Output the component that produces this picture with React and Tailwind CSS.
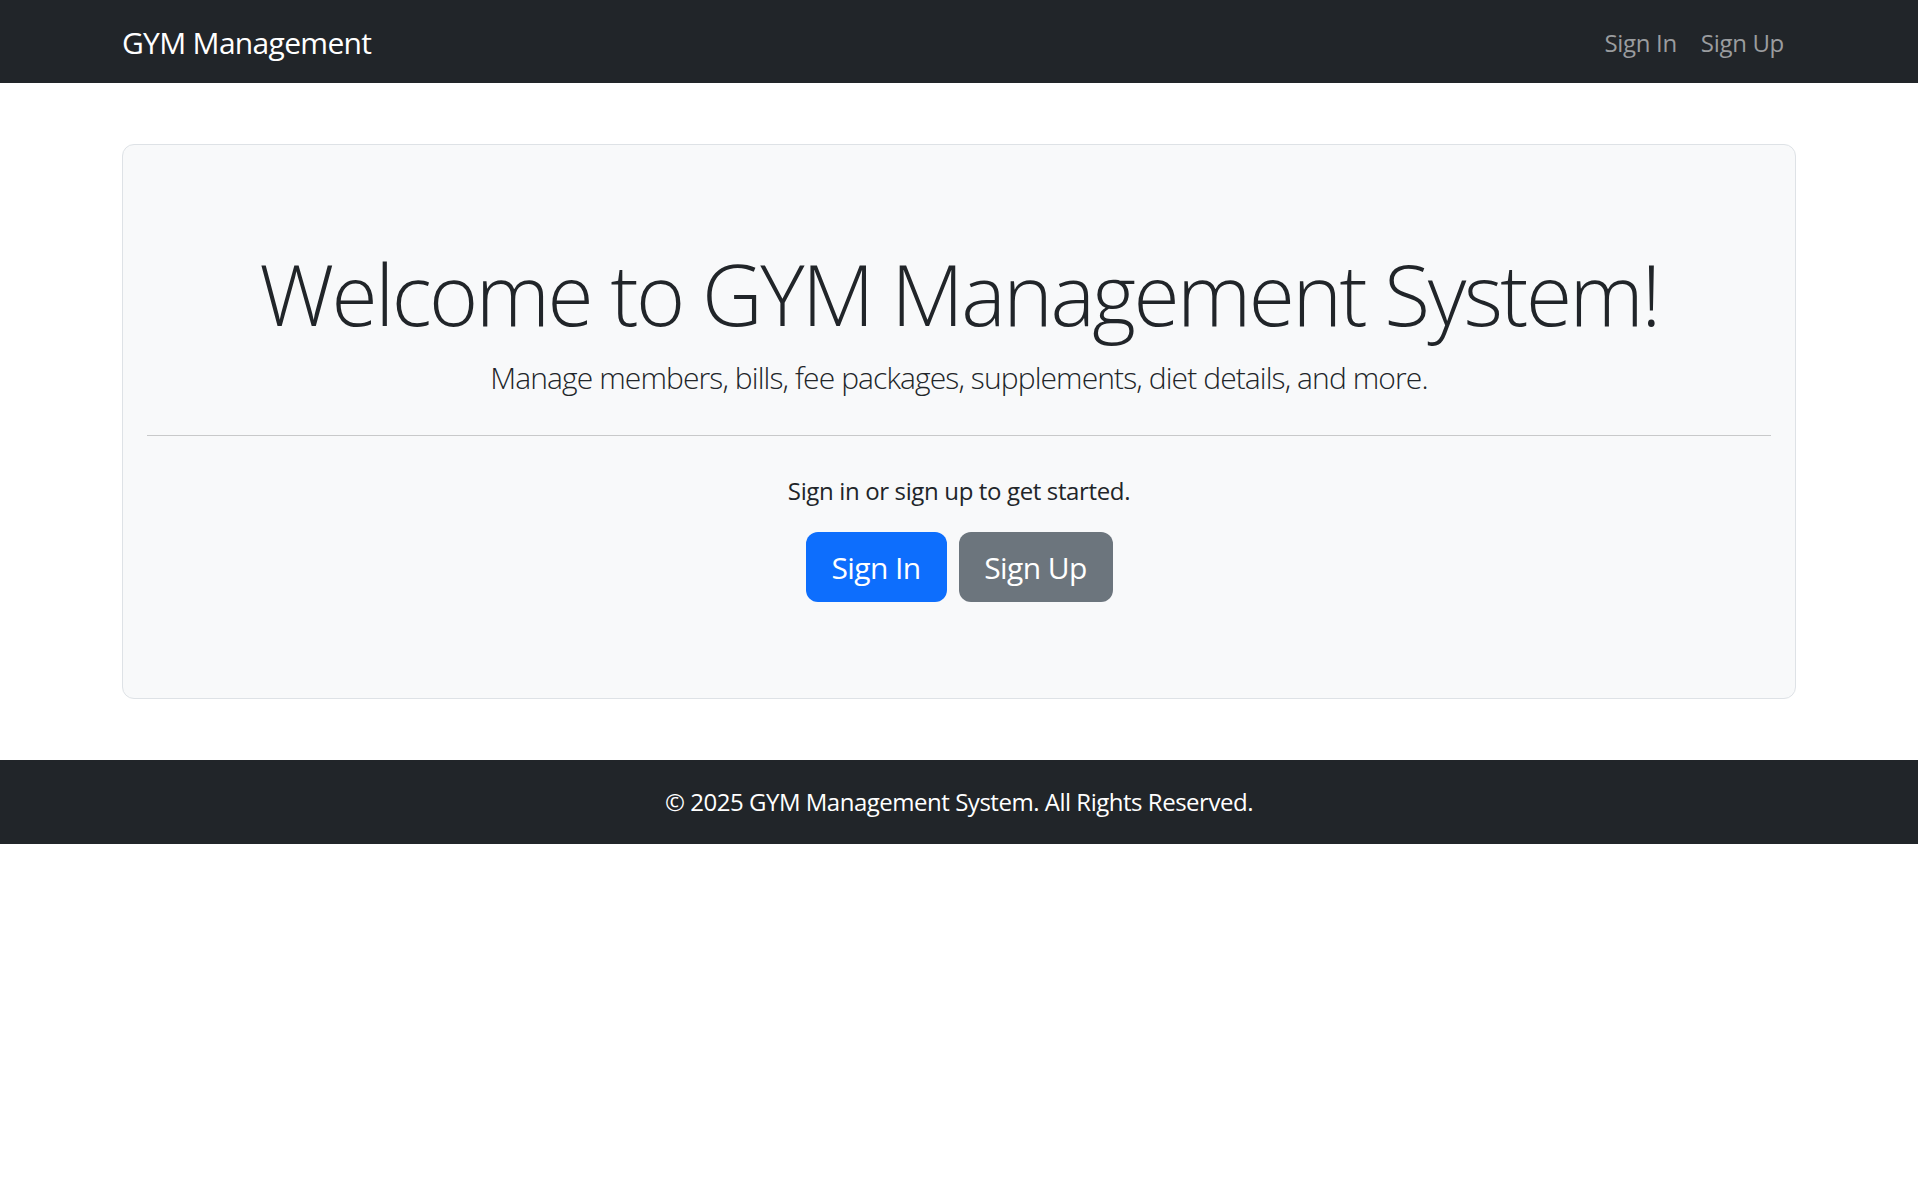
export default function App() {
    return (
        <div className="min-h-screen bg-white font-['Open_Sans',sans-serif] text-[#212529]">
            <nav className="bg-[#212529] h-[83px]">
                <div className="mx-auto w-[1674px] h-full pt-[2px] flex items-center justify-between">
                    <a className="text-white text-[30px] leading-[45px] tracking-[-0.023em]" href="#">GYM Management</a>
                    <div className="flex tracking-[-0.02em]">
                        <a className="px-[12px] text-[24px] leading-[36px] text-[#9a9c9f]" href="#">Sign In</a>
                        <a className="px-[12px] text-[24px] leading-[36px] text-[#9a9c9f]" href="#">Sign Up</a>
                    </div>
                </div>
            </nav>

            <main className="mx-auto w-[1674px] py-[61px]">
                <div className="h-[555px] border border-[#dee2e6] rounded-[12px] bg-[#f8f9fa] px-[24px] pt-[98px] text-center">
                    <h1 className="text-[84px] leading-[101px] font-light tracking-[-0.03em]">Welcome to GYM Management System!</h1>
                    <p className="mt-[11px] text-[30px] leading-[45px] font-light tracking-[-0.03em]">
                        Manage members, bills, fee packages, supplements, diet details, and more.
                    </p>
                    <hr className="mt-[35px] border-t border-[#c8c9ca]" />
                    <p className="mt-[37px] text-[24px] leading-[36px] tracking-[-0.015em]">Sign in or sign up to get started.</p>
                    <div className="mt-[23px] flex justify-center gap-[12px]">
                        <button className="w-[141px] h-[70px] rounded-[12px] bg-[#0d6efd] text-white text-[30px] tracking-[-0.02em]">Sign In</button>
                        <button className="w-[154px] h-[70px] rounded-[12px] bg-[#6c757d] text-white text-[30px] tracking-[-0.02em]">Sign Up</button>
                    </div>
                </div>
            </main>

            <footer className="bg-[#212529] h-[84px] flex items-center justify-center">
                <p className="text-white text-[24px] tracking-[-0.02em]">© 2025 GYM Management System. All Rights Reserved.</p>
            </footer>
        </div>
    )
}
